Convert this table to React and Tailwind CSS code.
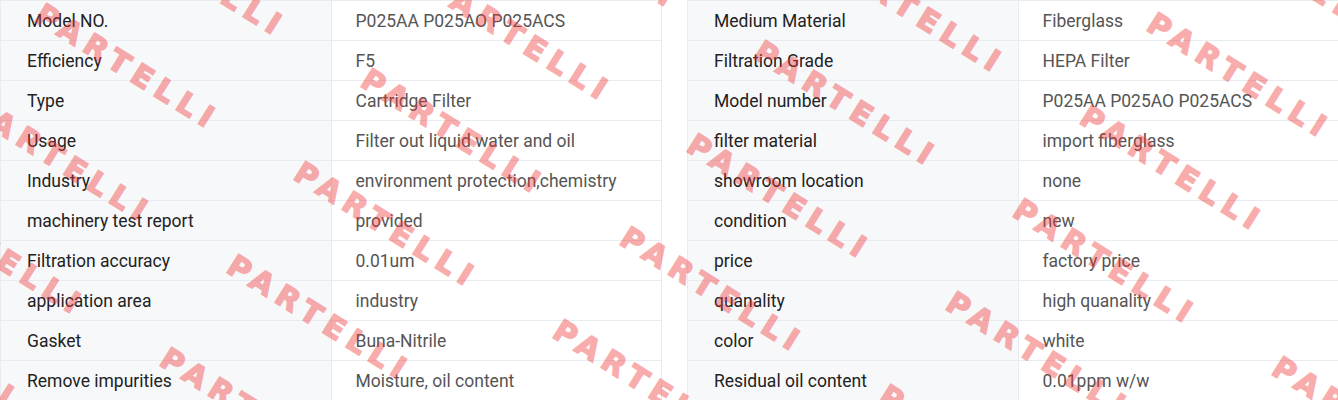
import React from "react";

const leftRows = [
  ["Model NO.", "P025AA P025AO P025ACS"],
  ["Efficiency", "F5"],
  ["Type", "Cartridge Filter"],
  ["Usage", "Filter out liquid water and oil"],
  ["Industry", "environment protection,chemistry"],
  ["machinery test report", "provided"],
  ["Filtration accuracy", "0.01um"],
  ["application area", "industry"],
  ["Gasket", "Buna-Nitrile"],
  ["Remove impurities", "Moisture, oil content"],
];

const rightRows = [
  ["Medium Material", "Fiberglass"],
  ["Filtration Grade", "HEPA Filter"],
  ["Model number", "P025AA P025AO P025ACS"],
  ["filter material", "import fiberglass"],
  ["showroom location", "none"],
  ["condition", "new"],
  ["price", "factory price"],
  ["quanality", "high quanality"],
  ["color", "white"],
  ["Residual oil content", "0.01ppm w/w"],
];

// watermark lattice
const marks = [];
for (let i = -4; i <= 6; i++) {
  for (let j = -2; j <= 4; j++) {
    const x = 372 + i * -67 + j * 393;
    const y = 64 + i * 93 + j * -28;
    if (x > -260 && x < 1340 && y > -150 && y < 410) marks.push([x, y]);
  }
}

const SpecTable = ({ rows }) => (
  <div className="w-[662px] shrink-0 border-t border-l border-[#e8ebf0]">
    {rows.map(([k, v]) => (
      <div key={k} className="flex h-[40px] border-b border-[#e8ebf0]">
        <div className="w-1/2 flex items-center pl-[26px] pt-px bg-[#f7f8fa] border-r border-[#e8ebf0] text-[#222]">
          {k}
        </div>
        <div className="w-1/2 flex items-center pl-[24px] pt-px bg-white border-r border-[#e8ebf0] text-[#555]">
          {v}
        </div>
      </div>
    ))}
  </div>
);

export default function App() {
  return (
    <div className="relative w-[1338px] h-[400px] overflow-hidden bg-white font-['Roboto',sans-serif] text-[17.5px]">
      <div className="flex gap-[25px]">
        <SpecTable rows={leftRows} />
        <SpecTable rows={rightRows} />
      </div>
      <div className="pointer-events-none absolute inset-0">
        {marks.map(([x, y]) => (
          <span
            key={`${x}-${y}`}
            className="absolute origin-top-left rotate-[32deg] whitespace-nowrap font-['DejaVu_Sans',sans-serif] font-bold text-[30px] leading-none tracking-[7px] text-[#f03232] opacity-40 [-webkit-text-stroke:1.5px_#f03232]"
            style={{ left: x, top: y }}
          >
            PARTELLI
          </span>
        ))}
      </div>
    </div>
  );
}
